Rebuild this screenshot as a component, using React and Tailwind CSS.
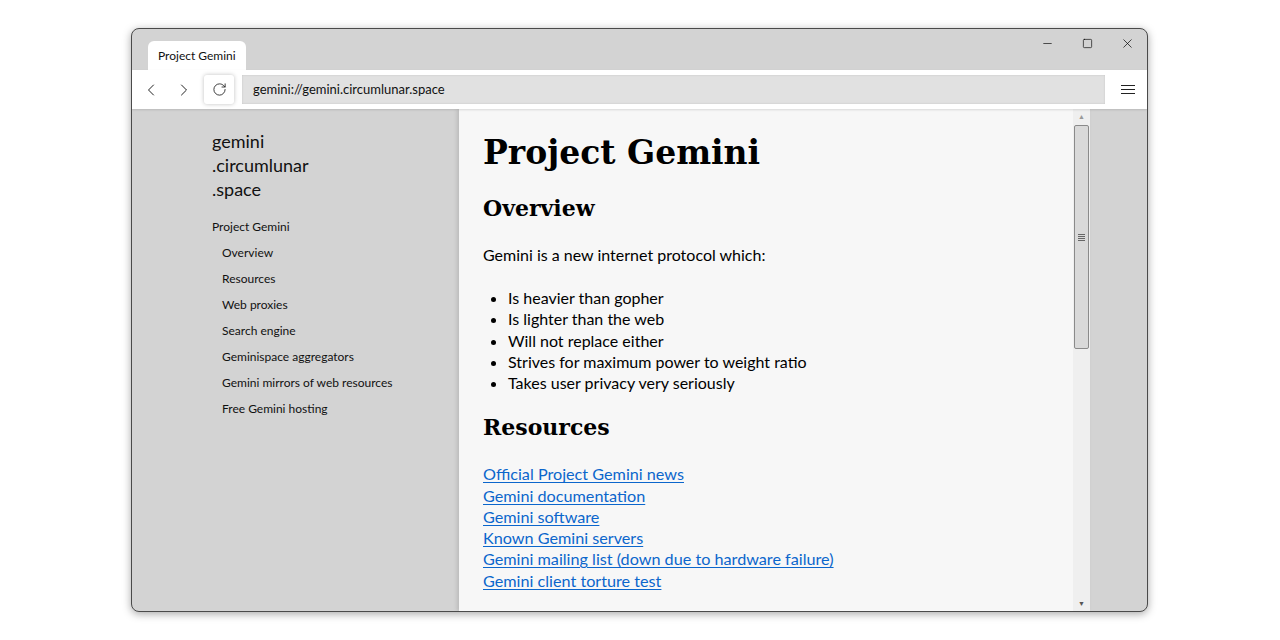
import { ChevronLeft, ChevronRight, RotateCw, Minus, Square, X } from 'lucide-react';

const NAV = [
  'Overview',
  'Resources',
  'Web proxies',
  'Search engine',
  'Geminispace aggregators',
  'Gemini mirrors of web resources',
  'Free Gemini hosting',
];

const POINTS = [
  'Is heavier than gopher',
  'Is lighter than the web',
  'Will not replace either',
  'Strives for maximum power to weight ratio',
  'Takes user privacy very seriously',
];

const LINKS = [
  'Official Project Gemini news',
  'Gemini documentation',
  'Gemini software',
  'Known Gemini servers',
  'Gemini mailing list (down due to hardware failure)',
  'Gemini client torture test',
];

const sans = "font-['Segoe_UI','Lato','Liberation_Sans',sans-serif]";
const serif = "font-['Georgia','DejaVu_Serif',serif]";

export default function App() {
  return (
    <div className={`w-[1280px] h-[640px] bg-white ${sans} text-black`}>
      <div className="ml-[131px] pt-[28px]">
        {/* Window */}
        <div className="w-[1017px] h-[584px] rounded-[8px] border border-[#4a4a4a] bg-[#d3d3d3] overflow-hidden flex flex-col shadow-[0_2px_8px_rgba(0,0,0,0.35)]">
          {/* Title bar */}
          <div className="h-[41px] flex items-end pl-[16px] relative">
            <div className="h-[29px] w-[98px] bg-white rounded-t-[6px] flex items-center pl-[10px] text-[12px] text-[#111]">
              Project Gemini
            </div>
            <div className="absolute right-0 top-0 flex items-center h-[29px]">
              <div className="w-[40px] flex justify-center"><Minus size={13} strokeWidth={1.2} /></div>
              <div className="w-[40px] flex justify-center"><Square size={11} strokeWidth={1.4} /></div>
              <div className="w-[40px] flex justify-center"><X size={15} strokeWidth={1.1} /></div>
            </div>
          </div>

          {/* Toolbar */}
          <div className="h-[39px] bg-white flex items-center pl-[9px] shadow-[0_1px_2px_rgba(0,0,0,0.12)] z-10">
            <ChevronLeft size={20} strokeWidth={1.2} className="text-[#222]" />
            <ChevronRight size={20} strokeWidth={1.2} className="ml-[13px] text-[#222]" />
            <div className="ml-[10px] w-[30px] h-[29px] rounded-[3px] bg-white shadow-[0_0_4px_rgba(0,0,0,0.25)] flex items-center justify-center">
              <RotateCw size={15} strokeWidth={1.4} className="text-[#222]" />
            </div>
            <div className="ml-[8px] w-[863px] h-[29px] bg-[#e1e1e1] shadow-[inset_0_0_2px_rgba(0,0,0,0.15)] flex items-center pl-[11px] text-[13px] text-[#111]">
              gemini://gemini.circumlunar.space
            </div>
            <div className="flex-1 flex justify-center pl-[4px]">
              <div className="flex flex-col gap-[3px] w-[14px]">
                <span className="h-[1px] bg-[#222]" />
                <span className="h-[1px] bg-[#222]" />
                <span className="h-[1px] bg-[#222]" />
              </div>
            </div>
          </div>

          {/* Body */}
          <div className="flex-1 flex min-h-0">
            {/* Sidebar */}
            <div className="w-[327px] pl-[80px] pt-[20px] text-[#111]">
              <div className="text-[18px] leading-[24px]">
                <div>gemini</div>
                <div>.circumlunar</div>
                <div>.space</div>
              </div>
              <div className="mt-[13px] text-[12px] leading-[26px]">
                <div>Project Gemini</div>
                {NAV.map((n) => (
                  <div key={n} className="pl-[10px]">{n}</div>
                ))}
              </div>
            </div>

            {/* Content */}
            <div className="w-[631px] bg-[#f7f7f7] flex shadow-[-2px_0_4px_rgba(0,0,0,0.12)]">
              <div className="flex-1 pl-[24px] pt-[21px] text-[16px]">
                <h1 className={`${serif} font-bold text-[33px] leading-[46px]`}>Project Gemini</h1>
                <h2 className={`${serif} font-bold text-[22px] leading-[32px] mt-[16px]`}>Overview</h2>
                <p className="mt-[20px] leading-[21px]">Gemini is a new internet protocol which:</p>
                <ul className="mt-[22px] leading-[21.3px] pl-[25px] list-disc">
                  {POINTS.map((p) => (
                    <li key={p}>{p}</li>
                  ))}
                </ul>
                <h2 className={`${serif} font-bold text-[22px] leading-[32px] mt-[18px]`}>Resources</h2>
                <div className="mt-[20px] leading-[21.2px] text-[16.2px]">
                  {LINKS.map((l) => (
                    <div key={l}>
                      <a href="#" className="text-[#0b66cc] underline underline-offset-[2px]">{l}</a>
                    </div>
                  ))}
                </div>
              </div>
              {/* Scrollbar */}
              <div className="w-[17px] bg-[#efefef] flex flex-col items-center pt-[3px] pb-[4px]">
                <div className="text-[7px] leading-[8px] text-[#999]">▲</div>
                <div className="mt-[5px] w-[15px] h-[224px] border border-[#8a8a8a] rounded-[2px] bg-[#d9d9d9] flex items-center justify-center">
                  <div className="flex flex-col gap-[1px] w-[7px]">
                    <span className="h-[1px] bg-[#666]" />
                    <span className="h-[1px] bg-[#666]" />
                    <span className="h-[1px] bg-[#666]" />
                    <span className="h-[1px] bg-[#666]" />
                  </div>
                </div>
                <div className="flex-1" />
                <div className="text-[7px] leading-[8px] text-[#555]">▼</div>
              </div>
            </div>
          </div>
        </div>
      </div>
    </div>
  );
}
